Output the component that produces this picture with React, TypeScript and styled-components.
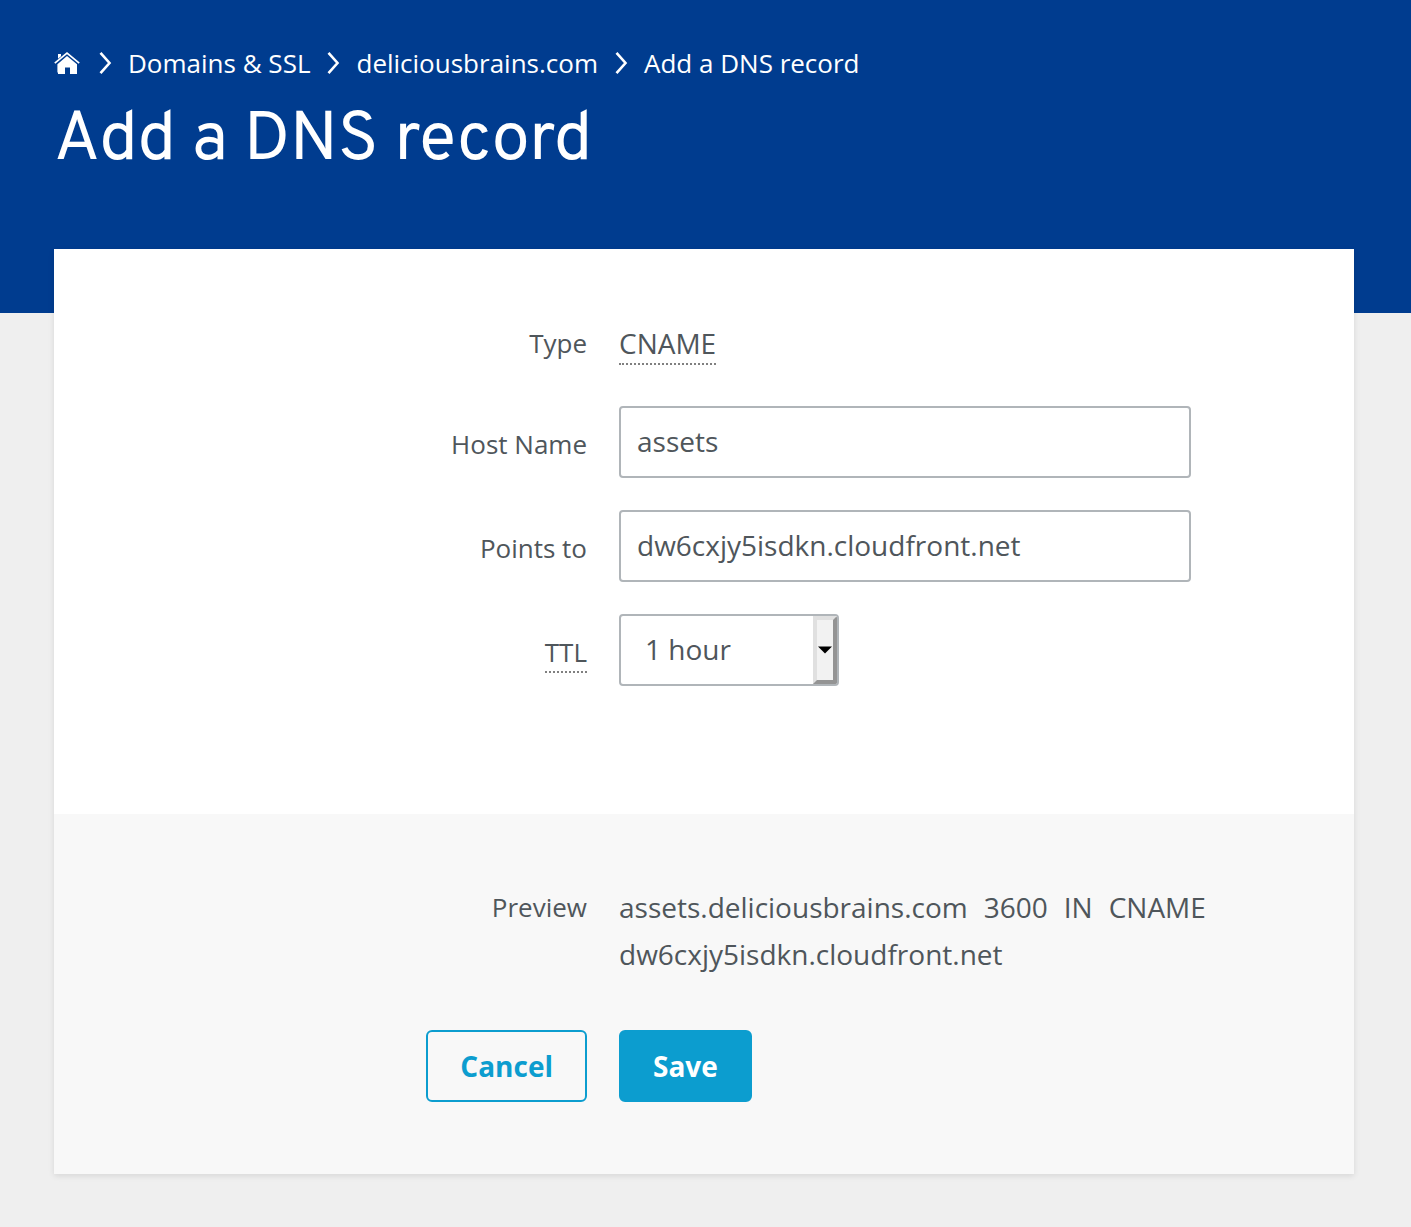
import React, { useState } from "react";
import styled, { createGlobalStyle } from "styled-components";

const GlobalStyle = createGlobalStyle`
  *, *::before, *::after { box-sizing: border-box; }
  body {
    margin: 0;
    background: #efefef;
    color: #4f565b;
    font-family: "Open Sans", "Noto Sans", sans-serif;
    font-size: 28px;
    line-height: 47px;
  }
`;

const Header = styled.header`
  background: #003c8f;
  padding: 43px 57px 128px 54px;
  color: #fff;
`;

const Crumbs = styled.ol`
  display: flex;
  align-items: center;
  flex-wrap: wrap;
  gap: 16px;
  margin: 0;
  padding: 0;
  list-style: none;
  font-size: 26px;
  line-height: 40px;
`;

const Crumb = styled.li`
  display: flex;
  align-items: center;
  gap: 16px;
`;

const CrumbLink = styled.a`
  display: flex;
  color: inherit;
  text-decoration: none;
`;

const Title = styled.h1`
  margin: 16px 0 0;
  font-family: Overpass, Roboto, sans-serif;
  font-size: 68px;
  font-weight: 400;
  line-height: 86px;
`;

const Card = styled.form`
  margin: -64px 57px 53px 54px;
  background: #fff;
  box-shadow: 0 2px 6px rgba(0, 0, 0, 0.1);
`;

const Section = styled.div<{ $muted?: boolean }>`
  display: flex;
  flex-direction: column;
  gap: ${(p) => (p.$muted ? "52px" : "32px")};
  padding: ${(p) => (p.$muted ? "70px 0 72px" : "71px 0 128px")};
  background: ${(p) => (p.$muted ? "#f8f8f8" : "#fff")};
`;

const Row = styled.div`
  display: grid;
  grid-template-columns: 41% minmax(0, 1fr);
  column-gap: 32px;
  align-items: start;
`;

const Caption = styled.div<{ $inset?: boolean }>`
  padding-top: ${(p) => (p.$inset ? "15px" : "0")};
  text-align: right;
  font-size: 26px;
`;

const Term = styled.abbr`
  display: inline-block;
  padding-bottom: 1px;
  border-bottom: 2px dotted #808080;
  line-height: normal;
  text-decoration: none;
`;

const TypeValue = styled.div`
  min-height: 54px;
`;

const TextInput = styled.input`
  width: 100%;
  max-width: 572px;
  height: 72px;
  padding: 0 16px 2px;
  border: 2px solid #b0b5b9;
  border-radius: 4px;
  background: #fff;
  color: inherit;
  font: inherit;
`;

const SelectFrame = styled.div`
  display: inline-grid;
  grid-template-columns: 192px 24px;
  height: 72px;
  border: 2px solid #b0b5b9;
  border-radius: 4px;
  background: #fff;
  overflow: hidden;
  vertical-align: top;
`;

const Select = styled.select`
  grid-area: 1 / 1 / 2 / 3;
  appearance: none;
  padding: 0 24px 2px;
  border: 0;
  background: transparent;
  color: inherit;
  font: inherit;
`;

const SelectHandle = styled.span`
  grid-area: 1 / 2 / 2 / 3;
  display: flex;
  align-items: center;
  justify-content: center;
  border: 4px solid;
  border-color: #e0e0e0 #949494 #949494 #e0e0e0;
  background: #f2f2f2;
  pointer-events: none;
`;

const Preview = styled.output`
  display: flex;
  flex-wrap: wrap;
  column-gap: 16px;
  max-width: 640px;
`;

const ButtonCell = styled.div`
  display: flex;
  justify-content: flex-end;
`;

const Button = styled.button<{ $primary?: boolean }>`
  justify-self: start;
  height: 72px;
  padding: 0 32px;
  border: 2px solid #0c9dcf;
  border-radius: 6px;
  background: ${(p) => (p.$primary ? "#0c9dcf" : "transparent")};
  color: ${(p) => (p.$primary ? "#fff" : "#0c9dcf")};
  font: inherit;
  font-weight: 700;
  cursor: pointer;
`;

const HomeIcon = () => (
  <svg width="28" height="24" viewBox="0 0 28 24" aria-hidden="true">
    <path d="M.8 12.2 13 2l12.2 10.2" fill="none" stroke="#fff" strokeWidth="1.7" />
    <path d="M4 3h3v2.3L4 7.8zM13 5l10 8.3V23h-7v-6.5h-5V23H4v-1l-.6-1v-7.7z" fill="#fff" />
  </svg>
);

const Chevron = () => (
  <svg width="14" height="24" viewBox="0 0 14 24" aria-hidden="true">
    <path d="M2.5 1.8 11.5 12l-9 10.2" fill="none" stroke="#fff" strokeWidth="2.6" />
  </svg>
);

const Arrow = () => (
  <svg width="14" height="8" viewBox="0 0 14 8" aria-hidden="true">
    <path d="M0 .5h14L7 7.5z" fill="#000" />
  </svg>
);

const crumbs = ["Domains & SSL", "deliciousbrains.com", "Add a DNS record"];
const ttls = [
  { label: "1 hour", seconds: 3600 },
  { label: "12 hours", seconds: 43200 },
  { label: "1 day", seconds: 86400 },
];

export default function App() {
  const [host, setHost] = useState("assets");
  const [target, setTarget] = useState("dw6cxjy5isdkn.cloudfront.net");
  const [ttl, setTtl] = useState(3600);

  return (
    <>
      <GlobalStyle />
      <Header>
        <nav aria-label="Breadcrumb">
          <Crumbs>
            <Crumb>
              <CrumbLink href="#home" aria-label="Home">
                <HomeIcon />
              </CrumbLink>
            </Crumb>
            {crumbs.map((name) => (
              <Crumb key={name}>
                <Chevron />
                <CrumbLink href="#crumb">{name}</CrumbLink>
              </Crumb>
            ))}
          </Crumbs>
        </nav>
        <Title>Add a DNS record</Title>
      </Header>
      <Card onSubmit={(e) => e.preventDefault()}>
        <Section>
          <Row>
            <Caption>Type</Caption>
            <TypeValue>
              <Term>CNAME</Term>
            </TypeValue>
          </Row>
          <Row>
            <Caption $inset>
              <label htmlFor="host">Host Name</label>
            </Caption>
            <TextInput id="host" value={host} onChange={(e) => setHost(e.target.value)} />
          </Row>
          <Row>
            <Caption $inset>
              <label htmlFor="target">Points to</label>
            </Caption>
            <TextInput id="target" value={target} onChange={(e) => setTarget(e.target.value)} />
          </Row>
          <Row>
            <Caption $inset>
              <label htmlFor="ttl">
                <Term>TTL</Term>
              </label>
            </Caption>
            <div>
              <SelectFrame>
                <Select id="ttl" value={ttl} onChange={(e) => setTtl(Number(e.target.value))}>
                  {ttls.map((t) => (
                    <option key={t.seconds} value={t.seconds}>
                      {t.label}
                    </option>
                  ))}
                </Select>
                <SelectHandle>
                  <Arrow />
                </SelectHandle>
              </SelectFrame>
            </div>
          </Row>
        </Section>
        <Section $muted>
          <Row>
            <Caption>Preview</Caption>
            <Preview htmlFor="host target ttl">
              <span>{host}.deliciousbrains.com</span>
              <span>{ttl}</span>
              <span>IN</span>
              <span>CNAME</span>
              <span>{target}</span>
            </Preview>
          </Row>
          <Row>
            <ButtonCell>
              <Button type="button">Cancel</Button>
            </ButtonCell>
            <Button type="submit" $primary>
              Save
            </Button>
          </Row>
        </Section>
      </Card>
    </>
  );
}
